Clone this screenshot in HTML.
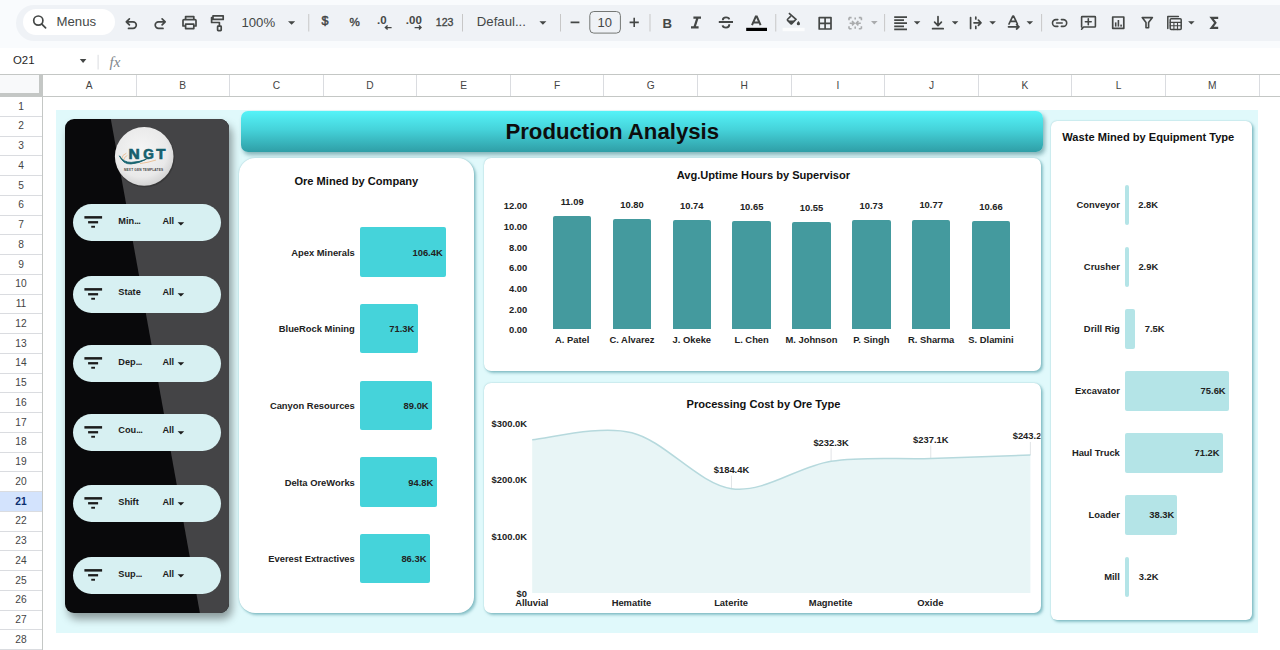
<!DOCTYPE html>
<html><head><meta charset="utf-8"><style>*{box-sizing:border-box;margin:0;padding:0}
html,body{width:1280px;height:650px;overflow:hidden;background:#fff;font-family:"Liberation Sans",sans-serif}
.abs{position:absolute}
.t{line-height:1;white-space:nowrap}
.ch{font-size:10.2px;color:#444;text-align:center}
.rh{left:0;width:42px;font-size:10.2px;text-align:center}
.pill{left:73.1px;width:147.9px;height:37px;border-radius:18.5px;background:#d7f0f2}
.pl{font-size:9.2px;font-weight:bold;color:#1c1c1c}
#title{border-radius:7px;background:linear-gradient(#55f3f8,#45d3da 45%,#2f9ea6);box-shadow:2px 3px 4px rgba(20,95,105,.45)}
.card{background:#fff;box-shadow:2px 2px 3px rgba(70,150,160,.55),0 0 1.5px rgba(70,150,160,.5)}
.ctitle{font-weight:bold;color:#111}
.lbl{font-weight:bold;color:#222}
</style></head><body>
<div class="abs" style="left:0;top:0;width:1280px;height:48px;background:#f9fbfd"></div>
<div class="abs" style="left:16px;top:5px;width:1300px;height:35.6px;background:#eff2f6;border-radius:18px"></div>
<div class="abs" style="left:23px;top:9.3px;width:92px;height:25.7px;background:#fff;border-radius:13px"></div>
<svg class="abs" style="left:0;top:0" width="1280" height="48" viewBox="0 0 1280 48">
<g fill="none" stroke="#444746" stroke-width="1.7" stroke-linecap="round" stroke-linejoin="round">
<circle cx="38.3" cy="20.6" r="4.6"/><path d="M41.8 24.1 L45.6 27.9"/>
<path d="M126.3 21.8 H133 A3.3 3.3 0 0 1 133 28.4 H128.5 M129.4 18.8 L126.3 21.8 L129.4 24.9"/>
<path d="M165.2 21.8 H158.5 A3.3 3.3 0 0 0 158.5 28.4 H163 M162.1 18.8 L165.2 21.8 L162.1 24.9"/>
<path d="M185.6 19.4 V16.6 H193.8 V19.4 M185.2 26 H183 V20.5 Q183 19.6 184 19.6 H195 Q196 19.6 196 20.5 V26 H194.3 M185.6 24.2 H193.8 V28.6 H185.6 Z"/>
<path d="M213 15.8 H223.2 V19.4 H213 Z M212.2 17.6 H211.6 V22.5 H219.4 V26.2"/>
<rect x="217.6" y="26.2" width="3.6" height="4.4" rx="0.6"/>
<path d="M819.2 17.6 H831 V29 H819.2 Z M825.1 17.6 V29 M819.2 23.3 H831"/>
<path d="M1081.6 27 V17.2 Q1081.6 16.6 1082.3 16.6 H1094.7 Q1095.4 16.6 1095.4 17.2 V26.3 Q1095.4 27 1094.7 27 H1083.6 L1081.6 29.2 M1088.3 18.8 V24.8 M1085.4 21.7 H1091.2" stroke-width="1.6"/>
<path d="M1112.7 17 H1123.8 V28.3 H1112.7 Z"/>
<path d="M1142.2 17.6 H1152.4 L1148.6 22.6 V27.8 H1146 V22.6 Z" stroke-width="1.6"/>
<path d="M1056.6 23 H1062.2" stroke-width="1.6"/>
<path d="M1057.8 19.6 H1055.9 A3.4 3.4 0 0 0 1055.9 26.4 H1057.8 M1061.4 19.6 H1063.3 A3.4 3.4 0 0 1 1063.3 26.4 H1061.4" stroke-width="1.6"/>
<path d="M1218.2 17.8 H1211.6 L1215.4 22.8 L1211.6 27.8 H1218.2" stroke-width="2.2" stroke-linejoin="miter" stroke-linecap="butt"/>
<path d="M1167.8 28.5 V16.4 H1178.4" stroke-width="1.5"/>
<rect x="1170.2" y="18.8" width="11" height="10.8" rx="1" stroke-width="1.5"/>
<path d="M1170.2 22.4 H1181.2 M1170.2 25.8 H1181.2 M1173.9 22.4 V29.6 M1177.5 22.4 V29.6" stroke-width="1.1"/>
<path d="M938 16.6 V25.4 M934.6 22.2 L938 25.6 L941.4 22.2 M932.6 28.7 H943.2"/>
<path d="M970.6 17.6 V28.4 M975.8 17.2 V19 M975.8 26.4 V28.4 M974 22.8 H981 M978.4 20.2 L981 22.8 L978.4 25.4"/>
<path d="M1009 24 L1012.8 16.2 H1013.6 L1017.4 24 M1010.4 21.4 H1016 M1008.5 26.8 H1019 M1016.6 24.6 L1019 26.8 L1016.6 29"/>
</g>
<g fill="none" stroke="#444746" stroke-width="1.7">
<path d="M894.2 17.2 H907 M894.2 20.1 H904 M894.2 23.2 H907 M894.2 26.3 H904 M894.2 29.3 H907"/>
</g>
<g fill="none" stroke="#a9abad" stroke-width="1.6">
<path d="M849 17.6 V20.2 M849 26.2 V28.8 M849 17.6 H851.6 M849 28.8 H851.6 M861.4 17.6 V20.2 M861.4 26.2 V28.8 M861.4 17.6 H858.8 M861.4 28.8 H858.8 M849.6 23.2 H853.8 M852 21 L854.2 23.2 L852 25.4 M860.8 23.2 H856.6 M858.4 21 L856.2 23.2 L858.4 25.4 M855.2 17.6 V19.6 M855.2 26.6 V28.8"/>
</g>
<path d="M871 21 H877.6 L874.3 24.4 Z" fill="#a9abad"/>
<g fill="#444746">
<path d="M288 21.2 H295.2 L291.6 24.8 Z M539.4 21.2 H546.4 L542.9 24.8 Z M913.8 21.2 H920.4 L917.1 24.6 Z M951.8 21.2 H958.4 L955.1 24.6 Z M989.3 21.2 H995.9 L992.6 24.6 Z M1026.5 21.2 H1033.1 L1029.8 24.6 Z M1188.1 21.2 H1194.6 L1191.35 24.6 Z"/>
<path d="M788.9 13.1 L796 19.4 L791.8 23.6 Q791.3 24.1 790.8 23.6 L787.6 20.4 Q787.1 19.8 787.6 19.3 L790.8 16.1" fill="none" stroke="#444746" stroke-width="1.6"/>
<path d="M787.8 20.4 H795 L791.3 24 Z"/>
<path d="M798.4 21 Q800 22.9 800 23.7 A1.6 1.6 0 0 1 796.8 23.7 Q796.8 22.9 798.4 21 Z"/>
<rect x="1114.9" y="22.4" width="1.6" height="4.2"/><rect x="1117.6" y="20" width="1.6" height="6.6"/><rect x="1120.3" y="24.6" width="1.6" height="2"/>
<rect x="746.2" y="27.8" width="20.8" height="3.2" fill="#000"/>
</g>
<g stroke="#c7c7c7" stroke-width="1">
<path d="M308.75 14 V31.5 M462.5 14 V31.5 M560.5 14 V31.5 M650 14 V31.5 M775.75 14 V31.5 M884.6 14 V31.5 M1041.6 14 V31.5"/>
</g>
<rect x="589.8" y="11.5" width="30.6" height="21.6" rx="4" fill="none" stroke="#747775" stroke-width="1"/>
<g fill="none" stroke="#444746" stroke-width="1.6">
<path d="M570.6 22.4 H579.4 M629.6 22.4 H638.8 M634.2 17.8 V27"/>
</g>
<g font-family="Liberation Sans" fill="#444746">
<text x="56.5" y="25.9" font-size="13.2">Menus</text>
<text x="241.4" y="27" font-size="13.2">100%</text>
<text x="476.8" y="25.6" font-size="13.2">Defaul...</text>
<text x="597.6" y="27" font-size="13">10</text>
<text x="321.6" y="25.4" font-size="12.6" stroke="#444746" stroke-width="0.5">$</text>
<text x="349.4" y="25.5" font-size="11.6" stroke="#444746" stroke-width="0.4">%</text>
<text x="435.8" y="25.5" font-size="10.6" stroke="#444746" stroke-width="0.35">123</text>
<text x="377" y="23.8" font-size="11.5" font-weight="bold">.0</text>
<text x="405.8" y="23.8" font-size="11.5" font-weight="bold">.00</text>
<text x="662.6" y="27.6" font-size="13.2" font-weight="bold">B</text>


</g>
<g fill="none" stroke="#444746" stroke-width="1.4">
<path d="M385.4 27.6 H391.6 M387.6 25.6 L385.4 27.6 L387.6 29.6 M414.6 27.6 H421 M419 25.6 L421 27.6 L419 29.6"/>
<path d="M718.8 22 H733 M722.8 20.2 Q722.8 17.4 726 17.4 Q729 17.4 729.2 19.4 M729.3 24.2 Q729.3 27.6 726 27.6 Q722.8 27.6 722.6 25.4" stroke-width="1.9"/>
</g>
<g fill="none" stroke="#444746" stroke-width="1.8" stroke-linecap="butt">
<path d="M693.4 17.6 H701 M691 27.4 H698.6 M697.6 17.6 L694.4 27.4" stroke-width="2.2"/>
<path d="M752 25.2 L755.8 16.6 H756.8 L760.6 25.2 M753.4 22.4 H759.2" stroke-width="2"/>
</g>
<rect x="782.6" y="27.8" width="22" height="3.4" fill="#fbfcfd"/>
</svg>

<div class="abs" style="left:0;top:48px;width:1280px;height:26.5px;background:#fff"></div>
<div class="abs t" style="left:13px;top:55.35px;font-size:11.4px;color:#1f1f1f">O21</div>
<svg class="abs" style="left:0;top:48px" width="140" height="27"><path d="M79.8 11.1 H86.4 L83.1 15 Z" fill="#444746"/><path d="M98.1 6.8 V21.5" stroke="#dadce0" stroke-width="1"/></svg>
<div class="abs t" style="left:109.6px;top:54.50px;font-size:15px;color:#80868b;font-family:'Liberation Serif',serif;font-style:italic">fx</div>
<div class="abs" style="left:0;top:74px;width:1280px;height:1px;background:#c4c7c5"></div>
<div class="abs" style="left:0;top:96px;width:1280px;height:1px;background:#c4c7c5"></div>
<div class="abs" style="left:0;top:75px;width:42.5px;height:21px;background:#f8f9fa"></div>
<div class="abs" style="left:38.8px;top:75px;width:3.8px;height:21px;background:#c4c7c5"></div>
<div class="abs" style="left:0;top:93px;width:42.6px;height:3.2px;background:#c4c7c5"></div>
<div class="abs t ch" style="left:42.5px;width:93.5px;top:80.77px">A</div>
<div class="abs" style="left:135.5px;top:75px;width:1px;height:21px;background:#dadce0"></div>
<div class="abs t ch" style="left:136.0px;width:93.5px;top:80.77px">B</div>
<div class="abs" style="left:229.0px;top:75px;width:1px;height:21px;background:#dadce0"></div>
<div class="abs t ch" style="left:229.5px;width:93.8px;top:80.77px">C</div>
<div class="abs" style="left:322.8px;top:75px;width:1px;height:21px;background:#dadce0"></div>
<div class="abs t ch" style="left:323.3px;width:93.5px;top:80.77px">D</div>
<div class="abs" style="left:416.3px;top:75px;width:1px;height:21px;background:#dadce0"></div>
<div class="abs t ch" style="left:416.8px;width:93.5px;top:80.77px">E</div>
<div class="abs" style="left:509.8px;top:75px;width:1px;height:21px;background:#dadce0"></div>
<div class="abs t ch" style="left:510.3px;width:93.6px;top:80.77px">F</div>
<div class="abs" style="left:603.4px;top:75px;width:1px;height:21px;background:#dadce0"></div>
<div class="abs t ch" style="left:603.9px;width:93.6px;top:80.77px">G</div>
<div class="abs" style="left:697.0px;top:75px;width:1px;height:21px;background:#dadce0"></div>
<div class="abs t ch" style="left:697.5px;width:93.5px;top:80.77px">H</div>
<div class="abs" style="left:790.5px;top:75px;width:1px;height:21px;background:#dadce0"></div>
<div class="abs t ch" style="left:791.0px;width:93.6px;top:80.77px">I</div>
<div class="abs" style="left:884.1px;top:75px;width:1px;height:21px;background:#dadce0"></div>
<div class="abs t ch" style="left:884.6px;width:93.7px;top:80.77px">J</div>
<div class="abs" style="left:977.8px;top:75px;width:1px;height:21px;background:#dadce0"></div>
<div class="abs t ch" style="left:978.3px;width:93.4px;top:80.77px">K</div>
<div class="abs" style="left:1071.2px;top:75px;width:1px;height:21px;background:#dadce0"></div>
<div class="abs t ch" style="left:1071.7px;width:93.7px;top:80.77px">L</div>
<div class="abs" style="left:1164.9px;top:75px;width:1px;height:21px;background:#dadce0"></div>
<div class="abs t ch" style="left:1165.4px;width:93.9px;top:80.77px">M</div>
<div class="abs" style="left:1258.8px;top:75px;width:1px;height:21px;background:#dadce0"></div>
<div class="abs t ch" style="left:1259.3px;width:93.7px;top:80.77px">N</div>
<div class="abs" style="left:42px;top:96px;width:1px;height:560px;background:#c4c7c5"></div>
<div class="abs" style="left:0;top:115.85px;width:42px;height:1px;background:#dadce0"></div>
<div class="abs t rh" style="top:101.51px;color:#444">1</div>
<div class="abs" style="left:0;top:135.60px;width:42px;height:1px;background:#dadce0"></div>
<div class="abs t rh" style="top:121.26px;color:#444">2</div>
<div class="abs" style="left:0;top:155.35px;width:42px;height:1px;background:#dadce0"></div>
<div class="abs t rh" style="top:141.01px;color:#444">3</div>
<div class="abs" style="left:0;top:175.10px;width:42px;height:1px;background:#dadce0"></div>
<div class="abs t rh" style="top:160.76px;color:#444">4</div>
<div class="abs" style="left:0;top:194.85px;width:42px;height:1px;background:#dadce0"></div>
<div class="abs t rh" style="top:180.51px;color:#444">5</div>
<div class="abs" style="left:0;top:214.60px;width:42px;height:1px;background:#dadce0"></div>
<div class="abs t rh" style="top:200.26px;color:#444">6</div>
<div class="abs" style="left:0;top:234.35px;width:42px;height:1px;background:#dadce0"></div>
<div class="abs t rh" style="top:220.01px;color:#444">7</div>
<div class="abs" style="left:0;top:254.10px;width:42px;height:1px;background:#dadce0"></div>
<div class="abs t rh" style="top:239.76px;color:#444">8</div>
<div class="abs" style="left:0;top:273.85px;width:42px;height:1px;background:#dadce0"></div>
<div class="abs t rh" style="top:259.51px;color:#444">9</div>
<div class="abs" style="left:0;top:293.60px;width:42px;height:1px;background:#dadce0"></div>
<div class="abs t rh" style="top:279.26px;color:#444">10</div>
<div class="abs" style="left:0;top:313.35px;width:42px;height:1px;background:#dadce0"></div>
<div class="abs t rh" style="top:299.01px;color:#444">11</div>
<div class="abs" style="left:0;top:333.10px;width:42px;height:1px;background:#dadce0"></div>
<div class="abs t rh" style="top:318.76px;color:#444">12</div>
<div class="abs" style="left:0;top:352.85px;width:42px;height:1px;background:#dadce0"></div>
<div class="abs t rh" style="top:338.51px;color:#444">13</div>
<div class="abs" style="left:0;top:372.60px;width:42px;height:1px;background:#dadce0"></div>
<div class="abs t rh" style="top:358.26px;color:#444">14</div>
<div class="abs" style="left:0;top:392.35px;width:42px;height:1px;background:#dadce0"></div>
<div class="abs t rh" style="top:378.01px;color:#444">15</div>
<div class="abs" style="left:0;top:412.10px;width:42px;height:1px;background:#dadce0"></div>
<div class="abs t rh" style="top:397.76px;color:#444">16</div>
<div class="abs" style="left:0;top:431.85px;width:42px;height:1px;background:#dadce0"></div>
<div class="abs t rh" style="top:417.51px;color:#444">17</div>
<div class="abs" style="left:0;top:451.60px;width:42px;height:1px;background:#dadce0"></div>
<div class="abs t rh" style="top:437.26px;color:#444">18</div>
<div class="abs" style="left:0;top:471.35px;width:42px;height:1px;background:#dadce0"></div>
<div class="abs t rh" style="top:457.01px;color:#444">19</div>
<div class="abs" style="left:0;top:491.10px;width:42px;height:1px;background:#dadce0"></div>
<div class="abs t rh" style="top:476.76px;color:#444">20</div>
<div class="abs" style="left:0;top:491.60px;width:42px;height:19.75px;background:#d3e3fd"></div>
<div class="abs" style="left:0;top:510.85px;width:42px;height:1px;background:#dadce0"></div>
<div class="abs t rh" style="top:496.51px;font-weight:bold;color:#0b2e6f">21</div>
<div class="abs" style="left:0;top:530.60px;width:42px;height:1px;background:#dadce0"></div>
<div class="abs t rh" style="top:516.26px;color:#444">22</div>
<div class="abs" style="left:0;top:550.35px;width:42px;height:1px;background:#dadce0"></div>
<div class="abs t rh" style="top:536.01px;color:#444">23</div>
<div class="abs" style="left:0;top:570.10px;width:42px;height:1px;background:#dadce0"></div>
<div class="abs t rh" style="top:555.76px;color:#444">24</div>
<div class="abs" style="left:0;top:589.85px;width:42px;height:1px;background:#dadce0"></div>
<div class="abs t rh" style="top:575.51px;color:#444">25</div>
<div class="abs" style="left:0;top:609.60px;width:42px;height:1px;background:#dadce0"></div>
<div class="abs t rh" style="top:595.26px;color:#444">26</div>
<div class="abs" style="left:0;top:629.35px;width:42px;height:1px;background:#dadce0"></div>
<div class="abs t rh" style="top:615.01px;color:#444">27</div>
<div class="abs" style="left:0;top:649.10px;width:42px;height:1px;background:#dadce0"></div>
<div class="abs t rh" style="top:634.76px;color:#444">28</div>
<div class="abs" style="left:56px;top:110px;width:1202px;height:522.5px;background:#e0f9fb"></div>
<div class="abs" style="left:65px;top:118.5px;width:164px;height:494px;border-radius:9px;overflow:hidden;background:#09090b;box-shadow:3px 6px 9px rgba(0,0,0,.38)">
<svg width="164" height="494" style="position:absolute;left:0;top:0"><polygon points="45.8,0 164,0 164,494 134.9,494" fill="#444446"/></svg></div>
<svg class="abs" style="left:110px;top:122px" width="70" height="70" viewBox="0 0 70 70">
<defs><radialGradient id="lg" cx="45%" cy="40%" r="60%"><stop offset="0" stop-color="#f5f5f5"/><stop offset="0.75" stop-color="#e9e9e9"/><stop offset="1" stop-color="#d4d4d4"/></radialGradient></defs>
<circle cx="34.8" cy="35.4" r="29.9" fill="#222" opacity="0.35"/>
<circle cx="34.2" cy="34.4" r="29.3" fill="url(#lg)"/>
<g fill="none" stroke="#e8b887" stroke-width="0.8"><path d="M11.6 37.4 Q12 32.6 16.4 31.2"/><path d="M13.6 38.4 Q14.2 34.6 17.4 33.4"/><path d="M30 41.6 Q38 40.6 46 38"/></g>
<g font-family="Liberation Sans" font-weight="bold" font-size="14.6" fill="#155f6e" stroke="#155f6e" stroke-width="0.7">
<text x="18.6" y="37.4" textLength="11.2" lengthAdjust="spacingAndGlyphs">N</text>
<text x="33.2" y="37.4" textLength="10.6" lengthAdjust="spacingAndGlyphs">G</text>
<text x="46.3" y="37.4" textLength="9.2" lengthAdjust="spacingAndGlyphs">T</text>
</g>
<path d="M9.4 33.8 Q13 42.4 21 41.9 Q29 41.4 36.4 37.2 Q29.6 40 21.2 40.4 Q13.6 40.6 9.4 33.8 Z" fill="#16636f" stroke="#16636f" stroke-width="0.9"/>
<text x="34" y="49.3" text-anchor="middle" font-family="Liberation Sans" font-weight="bold" font-size="3.2" letter-spacing="0.75" fill="#444" textLength="39.8">NEXT GEN TEMPLATES</text>
</svg>
<div class="abs pill" style="top:204.4px"></div>
<svg class="abs" style="left:80px;top:214.2px" width="30" height="20"><g fill="#1c1c1c"><rect x="4.4" y="2.1" width="17.7" height="2.5"/><rect x="8.1" y="7.1" width="10" height="2.3"/><rect x="11.25" y="11.8" width="3.75" height="1.9"/></g></svg>
<div class="abs t pl" style="left:118.3px;top:217.01px">Min<span style="letter-spacing:-0.5px">...</span></div>
<div class="abs t pl" style="left:162.4px;top:217.01px">All</div>
<svg class="abs" style="left:176px;top:221.7px" width="10" height="6"><path d="M1.6 0.3 H8.2 L4.9 3.6 Z" fill="#1c1c1c"/></svg>
<div class="abs pill" style="top:275.8px"></div>
<svg class="abs" style="left:80px;top:285.6px" width="30" height="20"><g fill="#1c1c1c"><rect x="4.4" y="2.1" width="17.7" height="2.5"/><rect x="8.1" y="7.1" width="10" height="2.3"/><rect x="11.25" y="11.8" width="3.75" height="1.9"/></g></svg>
<div class="abs t pl" style="left:118.3px;top:288.41px">State</div>
<div class="abs t pl" style="left:162.4px;top:288.41px">All</div>
<svg class="abs" style="left:176px;top:293.1px" width="10" height="6"><path d="M1.6 0.3 H8.2 L4.9 3.6 Z" fill="#1c1c1c"/></svg>
<div class="abs pill" style="top:345.0px"></div>
<svg class="abs" style="left:80px;top:354.8px" width="30" height="20"><g fill="#1c1c1c"><rect x="4.4" y="2.1" width="17.7" height="2.5"/><rect x="8.1" y="7.1" width="10" height="2.3"/><rect x="11.25" y="11.8" width="3.75" height="1.9"/></g></svg>
<div class="abs t pl" style="left:118.3px;top:357.61px">Dep<span style="letter-spacing:-0.5px">...</span></div>
<div class="abs t pl" style="left:162.4px;top:357.61px">All</div>
<svg class="abs" style="left:176px;top:362.3px" width="10" height="6"><path d="M1.6 0.3 H8.2 L4.9 3.6 Z" fill="#1c1c1c"/></svg>
<div class="abs pill" style="top:413.8px"></div>
<svg class="abs" style="left:80px;top:423.6px" width="30" height="20"><g fill="#1c1c1c"><rect x="4.4" y="2.1" width="17.7" height="2.5"/><rect x="8.1" y="7.1" width="10" height="2.3"/><rect x="11.25" y="11.8" width="3.75" height="1.9"/></g></svg>
<div class="abs t pl" style="left:118.3px;top:426.41px">Cou<span style="letter-spacing:-0.5px">...</span></div>
<div class="abs t pl" style="left:162.4px;top:426.41px">All</div>
<svg class="abs" style="left:176px;top:431.1px" width="10" height="6"><path d="M1.6 0.3 H8.2 L4.9 3.6 Z" fill="#1c1c1c"/></svg>
<div class="abs pill" style="top:485.0px"></div>
<svg class="abs" style="left:80px;top:494.8px" width="30" height="20"><g fill="#1c1c1c"><rect x="4.4" y="2.1" width="17.7" height="2.5"/><rect x="8.1" y="7.1" width="10" height="2.3"/><rect x="11.25" y="11.8" width="3.75" height="1.9"/></g></svg>
<div class="abs t pl" style="left:118.3px;top:497.61px">Shift</div>
<div class="abs t pl" style="left:162.4px;top:497.61px">All</div>
<svg class="abs" style="left:176px;top:502.3px" width="10" height="6"><path d="M1.6 0.3 H8.2 L4.9 3.6 Z" fill="#1c1c1c"/></svg>
<div class="abs pill" style="top:557.0px"></div>
<svg class="abs" style="left:80px;top:566.8px" width="30" height="20"><g fill="#1c1c1c"><rect x="4.4" y="2.1" width="17.7" height="2.5"/><rect x="8.1" y="7.1" width="10" height="2.3"/><rect x="11.25" y="11.8" width="3.75" height="1.9"/></g></svg>
<div class="abs t pl" style="left:118.3px;top:569.61px">Sup<span style="letter-spacing:-0.5px">...</span></div>
<div class="abs t pl" style="left:162.4px;top:569.61px">All</div>
<svg class="abs" style="left:176px;top:574.3px" width="10" height="6"><path d="M1.6 0.3 H8.2 L4.9 3.6 Z" fill="#1c1c1c"/></svg>
<div class="abs" id="title" style="left:241px;top:111.3px;width:802px;height:40.5px"></div>
<div class="abs t" style="left:505.4px;top:121.04px;font-size:22.2px;font-weight:bold;color:#0d0d0d;white-space:nowrap">Production Analysis</div>
<div class="abs card" style="left:239px;top:158px;width:235px;height:455px;border-radius:16px"></div>
<div class="abs card" style="left:484px;top:157.5px;width:557px;height:213.5px;border-radius:7px"></div>
<div class="abs card" style="left:484px;top:383px;width:557.4px;height:230px;border-radius:7px"></div>
<div class="abs card" style="left:1050.6px;top:120.6px;width:201.6px;height:499.6px;border-radius:6px"></div>
<div class="abs t ctitle" style="left:294.40px;top:175.60px;font-size:11.10px;">Ore Mined by Company</div>
<div class="abs t ctitle" style="left:676.70px;top:170.10px;font-size:11.10px;">Avg.Uptime Hours by Supervisor</div>
<div class="abs t ctitle" style="left:1062.30px;top:132.00px;font-size:11.10px;">Waste Mined by Equipment Type</div>
<div class="abs t ctitle" style="left:686.50px;top:399.30px;font-size:11.10px;">Processing Cost by Ore Type</div>
<div class="abs" style="left:360.2px;top:227.10px;width:86.10px;height:49.6px;background:#45d3da;border-radius:2px"></div>
<div class="abs t lbl" style="right:925.20px;top:247.64px;font-size:9.40px;">Apex Minerals</div>
<div class="abs t lbl" style="right:837.30px;top:247.64px;font-size:9.40px;">106.4K</div>
<div class="abs" style="left:360.2px;top:303.80px;width:57.70px;height:49.6px;background:#45d3da;border-radius:2px"></div>
<div class="abs t lbl" style="right:925.20px;top:324.34px;font-size:9.40px;">BlueRock Mining</div>
<div class="abs t lbl" style="right:865.70px;top:324.34px;font-size:9.40px;">71.3K</div>
<div class="abs" style="left:360.2px;top:380.50px;width:72.02px;height:49.6px;background:#45d3da;border-radius:2px"></div>
<div class="abs t lbl" style="right:925.20px;top:401.04px;font-size:9.40px;">Canyon Resources</div>
<div class="abs t lbl" style="right:851.38px;top:401.04px;font-size:9.40px;">89.0K</div>
<div class="abs" style="left:360.2px;top:457.20px;width:76.71px;height:49.6px;background:#45d3da;border-radius:2px"></div>
<div class="abs t lbl" style="right:925.20px;top:477.74px;font-size:9.40px;">Delta OreWorks</div>
<div class="abs t lbl" style="right:846.69px;top:477.74px;font-size:9.40px;">94.8K</div>
<div class="abs" style="left:360.2px;top:533.90px;width:69.83px;height:49.6px;background:#45d3da;border-radius:2px"></div>
<div class="abs t lbl" style="right:925.20px;top:554.44px;font-size:9.40px;">Everest Extractives</div>
<div class="abs t lbl" style="right:853.57px;top:554.44px;font-size:9.40px;">86.3K</div>
<div class="abs" style="left:552.90px;top:216.28px;width:38.5px;height:113.12px;background:#449a9e;border-radius:2px 2px 0 0"></div>
<div class="abs t lbl" style="left:572.15px;width:0;top:197.22px;font-size:9.40px;"><span style="position:absolute;left:0;transform:translateX(-50%)">11.09</span></div>
<div class="abs t lbl" style="left:572.15px;width:0;top:334.54px;font-size:9.40px;"><span style="position:absolute;left:0;transform:translateX(-50%)">A. Patel</span></div>
<div class="abs" style="left:612.73px;top:219.24px;width:38.5px;height:110.16px;background:#449a9e;border-radius:2px 2px 0 0"></div>
<div class="abs t lbl" style="left:631.98px;width:0;top:200.18px;font-size:9.40px;"><span style="position:absolute;left:0;transform:translateX(-50%)">10.80</span></div>
<div class="abs t lbl" style="left:631.98px;width:0;top:334.54px;font-size:9.40px;"><span style="position:absolute;left:0;transform:translateX(-50%)">C. Alvarez</span></div>
<div class="abs" style="left:672.56px;top:219.85px;width:38.5px;height:109.55px;background:#449a9e;border-radius:2px 2px 0 0"></div>
<div class="abs t lbl" style="left:691.81px;width:0;top:200.79px;font-size:9.40px;"><span style="position:absolute;left:0;transform:translateX(-50%)">10.74</span></div>
<div class="abs t lbl" style="left:691.81px;width:0;top:334.54px;font-size:9.40px;"><span style="position:absolute;left:0;transform:translateX(-50%)">J. Okeke</span></div>
<div class="abs" style="left:732.39px;top:220.77px;width:38.5px;height:108.63px;background:#449a9e;border-radius:2px 2px 0 0"></div>
<div class="abs t lbl" style="left:751.64px;width:0;top:201.71px;font-size:9.40px;"><span style="position:absolute;left:0;transform:translateX(-50%)">10.65</span></div>
<div class="abs t lbl" style="left:751.64px;width:0;top:334.54px;font-size:9.40px;"><span style="position:absolute;left:0;transform:translateX(-50%)">L. Chen</span></div>
<div class="abs" style="left:792.22px;top:221.79px;width:38.5px;height:107.61px;background:#449a9e;border-radius:2px 2px 0 0"></div>
<div class="abs t lbl" style="left:811.47px;width:0;top:202.73px;font-size:9.40px;"><span style="position:absolute;left:0;transform:translateX(-50%)">10.55</span></div>
<div class="abs t lbl" style="left:811.47px;width:0;top:334.54px;font-size:9.40px;"><span style="position:absolute;left:0;transform:translateX(-50%)">M. Johnson</span></div>
<div class="abs" style="left:852.05px;top:219.95px;width:38.5px;height:109.45px;background:#449a9e;border-radius:2px 2px 0 0"></div>
<div class="abs t lbl" style="left:871.30px;width:0;top:200.90px;font-size:9.40px;"><span style="position:absolute;left:0;transform:translateX(-50%)">10.73</span></div>
<div class="abs t lbl" style="left:871.30px;width:0;top:334.54px;font-size:9.40px;"><span style="position:absolute;left:0;transform:translateX(-50%)">P. Singh</span></div>
<div class="abs" style="left:911.88px;top:219.55px;width:38.5px;height:109.85px;background:#449a9e;border-radius:2px 2px 0 0"></div>
<div class="abs t lbl" style="left:931.13px;width:0;top:200.49px;font-size:9.40px;"><span style="position:absolute;left:0;transform:translateX(-50%)">10.77</span></div>
<div class="abs t lbl" style="left:931.13px;width:0;top:334.54px;font-size:9.40px;"><span style="position:absolute;left:0;transform:translateX(-50%)">R. Sharma</span></div>
<div class="abs" style="left:971.71px;top:220.67px;width:38.5px;height:108.73px;background:#449a9e;border-radius:2px 2px 0 0"></div>
<div class="abs t lbl" style="left:990.96px;width:0;top:201.61px;font-size:9.40px;"><span style="position:absolute;left:0;transform:translateX(-50%)">10.66</span></div>
<div class="abs t lbl" style="left:990.96px;width:0;top:334.54px;font-size:9.40px;"><span style="position:absolute;left:0;transform:translateX(-50%)">S. Dlamini</span></div>
<div class="abs t lbl" style="right:752.80px;top:325.24px;font-size:9.40px;">0.00</div>
<div class="abs t lbl" style="right:752.80px;top:304.58px;font-size:9.40px;">2.00</div>
<div class="abs t lbl" style="right:752.80px;top:283.92px;font-size:9.40px;">4.00</div>
<div class="abs t lbl" style="right:752.80px;top:263.26px;font-size:9.40px;">6.00</div>
<div class="abs t lbl" style="right:752.80px;top:242.60px;font-size:9.40px;">8.00</div>
<div class="abs t lbl" style="right:752.80px;top:221.94px;font-size:9.40px;">10.00</div>
<div class="abs t lbl" style="right:752.80px;top:201.28px;font-size:9.40px;">12.00</div>
<div class="abs" style="left:1124.8px;top:185.30px;width:3.85px;height:39.8px;background:#b4e4e7;border-radius:2px"></div>
<div class="abs t lbl" style="right:160.20px;top:200.34px;font-size:9.40px;">Conveyor</div>
<div class="abs t lbl" style="left:1138.25px;top:200.34px;font-size:9.40px;">2.8K</div>
<div class="abs" style="left:1124.8px;top:247.25px;width:3.99px;height:39.8px;background:#b4e4e7;border-radius:2px"></div>
<div class="abs t lbl" style="right:160.20px;top:262.29px;font-size:9.40px;">Crusher</div>
<div class="abs t lbl" style="left:1138.39px;top:262.29px;font-size:9.40px;">2.9K</div>
<div class="abs" style="left:1124.8px;top:309.20px;width:10.32px;height:39.8px;background:#b4e4e7;border-radius:2px"></div>
<div class="abs t lbl" style="right:160.20px;top:324.24px;font-size:9.40px;">Drill Rig</div>
<div class="abs t lbl" style="left:1144.72px;top:324.24px;font-size:9.40px;">7.5K</div>
<div class="abs" style="left:1124.8px;top:371.15px;width:104.03px;height:39.8px;background:#b4e4e7;border-radius:2px"></div>
<div class="abs t lbl" style="right:160.20px;top:386.19px;font-size:9.40px;">Excavator</div>
<div class="abs t lbl" style="right:54.37px;top:386.19px;font-size:9.40px;">75.6K</div>
<div class="abs" style="left:1124.8px;top:433.10px;width:97.97px;height:39.8px;background:#b4e4e7;border-radius:2px"></div>
<div class="abs t lbl" style="right:160.20px;top:448.14px;font-size:9.40px;">Haul Truck</div>
<div class="abs t lbl" style="right:60.43px;top:448.14px;font-size:9.40px;">71.2K</div>
<div class="abs" style="left:1124.8px;top:495.05px;width:52.70px;height:39.8px;background:#b4e4e7;border-radius:2px"></div>
<div class="abs t lbl" style="right:160.20px;top:510.09px;font-size:9.40px;">Loader</div>
<div class="abs t lbl" style="right:105.70px;top:510.09px;font-size:9.40px;">38.3K</div>
<div class="abs" style="left:1124.8px;top:557.00px;width:4.40px;height:39.8px;background:#b4e4e7;border-radius:2px"></div>
<div class="abs t lbl" style="right:160.20px;top:572.04px;font-size:9.40px;">Mill</div>
<div class="abs t lbl" style="left:1138.80px;top:572.04px;font-size:9.40px;">3.2K</div>
<svg class="abs" style="left:0;top:0;overflow:visible" width="1280" height="650">
<defs><clipPath id="cc"><rect x="484" y="383" width="556.5" height="230"/></clipPath></defs>
<g clip-path="url(#cc)">
<path d="M532.20 439.82 C548.81 438.63 598.63 424.58 631.84 432.71 C665.05 440.85 698.27 483.89 731.48 488.64 C764.69 493.39 797.91 466.22 831.12 461.19 C864.33 456.16 897.55 459.48 930.76 458.44 C963.97 457.40 1013.79 455.53 1030.40 454.95 L1030.40 593.10 L532.20 593.10 Z" fill="#e8f5f6"/>
<path d="M731.48 475.64 V488.64" stroke="#d9dde0" stroke-width="0.8"/>
<path d="M831.12 448.19 V461.19" stroke="#d9dde0" stroke-width="0.8"/>
<path d="M930.76 445.44 V458.44" stroke="#d9dde0" stroke-width="0.8"/>
<path d="M1030.40 441.95 V454.95" stroke="#d9dde0" stroke-width="0.8"/>
<path d="M532.20 439.82 C548.81 438.63 598.63 424.58 631.84 432.71 C665.05 440.85 698.27 483.89 731.48 488.64 C764.69 493.39 797.91 466.22 831.12 461.19 C864.33 456.16 897.55 459.48 930.76 458.44 C963.97 457.40 1013.79 455.53 1030.40 454.95" fill="none" stroke="#b6d9dd" stroke-width="1.5"/>
<text x="731.48" y="473.04" text-anchor="middle" font-family="Liberation Sans" font-weight="bold" font-size="9.4" fill="#222">$184.4K</text>
<text x="831.12" y="445.59" text-anchor="middle" font-family="Liberation Sans" font-weight="bold" font-size="9.4" fill="#222">$232.3K</text>
<text x="930.76" y="442.84" text-anchor="middle" font-family="Liberation Sans" font-weight="bold" font-size="9.4" fill="#222">$237.1K</text>
<text x="1030.40" y="439.35" text-anchor="middle" font-family="Liberation Sans" font-weight="bold" font-size="9.4" fill="#222">$243.2K</text>
</g>
<text x="527" y="596.70" text-anchor="end" font-family="Liberation Sans" font-weight="bold" font-size="9.4" fill="#222">$0</text>
<text x="527" y="540.00" text-anchor="end" font-family="Liberation Sans" font-weight="bold" font-size="9.4" fill="#222">$100.0K</text>
<text x="527" y="483.30" text-anchor="end" font-family="Liberation Sans" font-weight="bold" font-size="9.4" fill="#222">$200.0K</text>
<text x="527" y="426.60" text-anchor="end" font-family="Liberation Sans" font-weight="bold" font-size="9.4" fill="#222">$300.0K</text>
<text x="531.80" y="605.6" text-anchor="middle" font-family="Liberation Sans" font-weight="bold" font-size="9.4" fill="#222">Alluvial</text>
<text x="631.44" y="605.6" text-anchor="middle" font-family="Liberation Sans" font-weight="bold" font-size="9.4" fill="#222">Hematite</text>
<text x="731.08" y="605.6" text-anchor="middle" font-family="Liberation Sans" font-weight="bold" font-size="9.4" fill="#222">Laterite</text>
<text x="830.72" y="605.6" text-anchor="middle" font-family="Liberation Sans" font-weight="bold" font-size="9.4" fill="#222">Magnetite</text>
<text x="930.36" y="605.6" text-anchor="middle" font-family="Liberation Sans" font-weight="bold" font-size="9.4" fill="#222">Oxide</text>
</svg>
</body></html>
